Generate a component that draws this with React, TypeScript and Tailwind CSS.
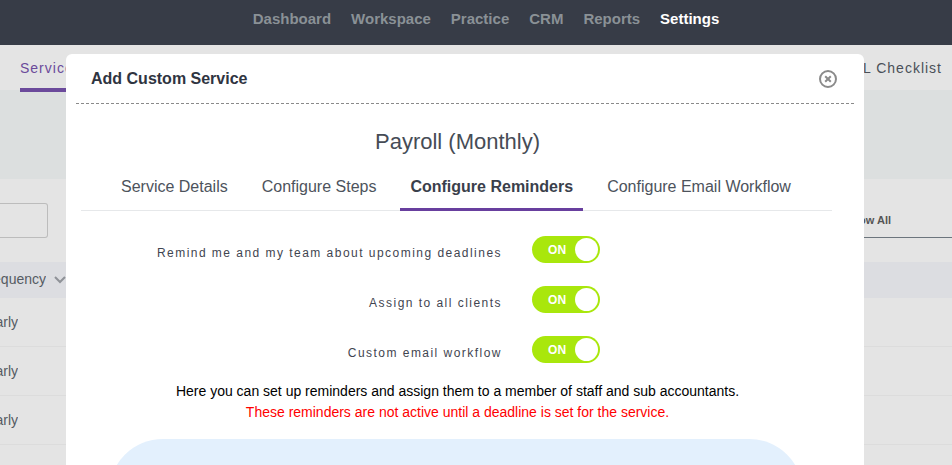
const navItems = ["Dashboard", "Workspace", "Practice", "CRM", "Reports", "Settings"];
const tabs = ["Service Details", "Configure Steps", "Configure Reminders", "Configure Email Workflow"];
const reminders = ["Remind me and my team about upcoming deadlines", "Assign to all clients", "Custom email workflow"];

const Toggle = () => (
  <div className="flex items-center justify-between w-[68px] h-[27px] rounded-full bg-[#a9e70c] pl-4 pr-[2px]">
    <span className="text-[12px] font-bold text-white tracking-[0.2px]">ON</span>
    <span className="w-[23px] h-[23px] rounded-full bg-white" />
  </div>
);

const CloseIcon = () => (
  <svg width="20" height="20" viewBox="0 0 20 20" fill="none" stroke="#8b8b8b">
    <circle cx="10" cy="10" r="8" strokeWidth="2" />
    <path d="M7.2 7.2l5.6 5.6M12.8 7.2l-5.6 5.6" strokeWidth="2" />
  </svg>
);

const Background = () => (
  <div className="flex flex-col h-full">
    <div className="flex justify-between h-[45px] shrink-0 bg-[#e4e4e4] pl-5 pr-[10px] text-[14px] tracking-[1px]">
      <div className="relative z-10 w-[70px] h-[47px] border-b-4 border-[#6b4a9b] pt-[13px] text-[#6b4a9b] whitespace-nowrap">Service</div>
      <div className="pt-[13px] text-[#4a5058] whitespace-nowrap">AML Checklist</div>
    </div>
    <div className="h-[89px] shrink-0 bg-[#dcdfdf]" />
    <div className="flex justify-between h-[83px] shrink-0 pt-6">
      <div className="w-[48px] h-[35px] border border-l-0 border-[#bcbcbc] rounded-r-[3px]" />
      <div className="flex items-center w-[120px] h-[35px] border-b border-[#6c757d] pl-[13px] text-[11px] font-bold text-[#555] whitespace-nowrap">
        Show All
      </div>
    </div>
    <div className="flex items-center h-[36px] shrink-0 bg-[#dcdde1] text-[14px] text-[#555b63] pb-[2px]">
      <span className="w-[46px] flex justify-end overflow-hidden whitespace-nowrap">Frequency</span>
      <svg width="12" height="8" viewBox="0 0 12 8" fill="none" stroke="#8f9298" strokeWidth="2" className="ml-[8px] mt-[2px]">
        <path d="M1 1l5 5 5-5" />
      </svg>
    </div>
    {[0, 1, 2].map((i) => (
      <div key={i} className="flex items-center h-[49px] shrink-0 border-b border-[#dcdcdc] text-[14px] text-[#555b63]">
        <span className="w-[18px] flex justify-end overflow-hidden">Yearly</span>
      </div>
    ))}
  </div>
);

export default function App() {
  return (
    <div className="w-[952px] h-[465px] overflow-hidden flex flex-col bg-[#e4e4e4] font-['Liberation_Sans',Arial,sans-serif]">
      <header className="flex justify-center gap-5 h-[45px] shrink-0 bg-[#373c47] pl-5 pt-[10px] text-[15px] leading-[18px] font-bold text-[#8a9196]">
        {navItems.map((item) => (
          <span key={item} className={item === "Settings" ? "text-white" : ""}>{item}</span>
        ))}
      </header>
      <main className="relative flex-1 min-h-0">
        <Background />
        <div className="absolute z-20 left-[66px] top-[9px] w-[798px] h-[420px] overflow-hidden rounded-t-[6px] bg-white pt-[1px]">
          <div className="flex items-center justify-between h-[49px] mx-[10px] border-b border-dashed border-[#8a8a8a] pl-[15px] pr-[16px]">
            <h2 className="text-[16px] font-bold text-[#2f3441] -mt-[1px]">Add Custom Service</h2>
            <CloseIcon />
          </div>
          <h1 className="mt-[22px] pr-[15px] text-center text-[22px] leading-[32px] text-[#464c56]">Payroll (Monthly)</h1>
          <div className="flex ml-[15px] mr-[32px] mt-[11px] h-[42px] border-b border-[#e6e8ea] pl-[30px] gap-[14px]">
            {tabs.map((tab) => (
              <div
                key={tab}
                className={`px-[10px] h-[42px] leading-[36px] text-[16px] whitespace-nowrap ${tab === "Configure Reminders" ? "font-bold text-[#3a404b] border-b-[3px] border-[#683f9e]" : "text-[#4d535c]"}`}
              >
                {tab}
              </div>
            ))}
          </div>
          <div className="flex flex-col gap-[23px] mt-[25px]">
            {reminders.map((label) => (
              <div key={label} className="flex items-center h-[27px]">
                <span className="w-[436px] text-right text-[12px] tracking-[1.47px] text-[#3f4550] mt-[7px]">{label}</span>
                <div className="ml-[30px]"><Toggle /></div>
              </div>
            ))}
          </div>
          <div className="pr-[15px] text-center text-[14px] leading-[21px]">
            <p className="mt-[18px] text-black">Here you can set up reminders and assign them to a member of staff and sub accountants.</p>
            <p className="text-[#ff0000]">These reminders are not active until a deadline is set for the service.</p>
          </div>
          <div className="ml-[43px] w-[694px] mt-[16px] h-[120px] rounded-[54px] bg-[#e3f0fd]" />
        </div>
      </main>
    </div>
  );
}
